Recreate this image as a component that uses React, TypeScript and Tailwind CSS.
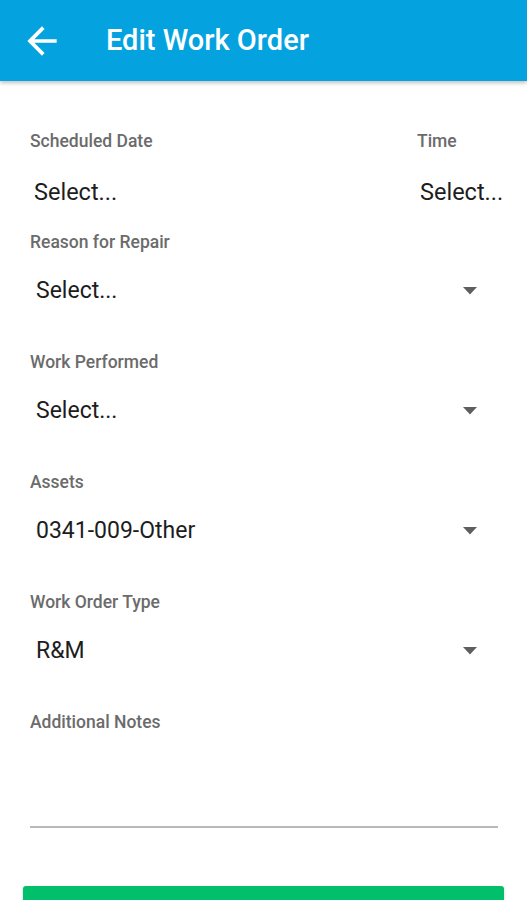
import React from 'react';

const Caret = () => (
  <svg width="14" height="8" viewBox="0 0 14 8" className="shrink-0">
    <path d="M0 0h14L7 7.5z" fill="#5f5f5f" />
  </svg>
);

const Label = ({ children }: { children: React.ReactNode }) => (
  <div className="h-5 text-[17.5px] leading-5 font-medium text-[#6b6b6b]">{children}</div>
);

const Dropdown = ({ label, value }: { label: string; value: string }) => (
  <div className="mb-[47px]">
    <Label>{label}</Label>
    <div className="mt-[25px] flex h-7 items-center justify-between pl-[6px] pr-[20px]">
      <span className="text-[23px] leading-7 text-[#1d1d1d]">{value}</span>
      <Caret />
    </div>
  </div>
);

export default function App() {
  return (
    <div className="min-h-[900px] bg-white font-['Roboto',sans-serif]">
      {/* Toolbar */}
      <header className="relative z-10 flex h-[81px] items-center bg-[#04a3df] shadow-[0_2px_4px_rgba(0,0,0,0.25)]">
        <svg width="44" height="44" viewBox="0 0 24 24" className="ml-[20px]">
          <path d="M20 11H7.83l5.59-5.59L12 4l-8 8 8 8 1.41-1.41L7.83 13H20v-2z" fill="#fff" />
        </svg>
        <h1 className="ml-[42px] text-[29px] font-medium text-white">Edit Work Order</h1>
      </header>

      <div className="pt-[50px]">
        {/* Date / time row */}
        <div className="flex">
          <div className="flex-1 pl-[30px]">
            <Label>Scheduled Date</Label>
            <div className="mt-[27px] h-7 pl-[4px] text-[23.5px] leading-7 text-[#1d1d1d]">Select...</div>
          </div>
          <div className="w-[110px]">
            <Label>Time</Label>
            <div className="mt-[27px] h-7 pl-[3px] text-[23.5px] leading-7 text-[#1d1d1d]">Select...</div>
          </div>
        </div>

        <div className="mt-[26px] px-[30px]">
          <Dropdown label="Reason for Repair" value="Select..." />
          <Dropdown label="Work Performed" value="Select..." />
          <Dropdown label="Assets" value="0341-009-Other" />
          <Dropdown label="Work Order Type" value="R&M" />

          <Label>Additional Notes</Label>
          <div className="mr-[-1px] h-[96px] border-b-2 border-[#b9b9b9]" />
        </div>

        <div className="mt-[58px] px-[23px]">
          <button className="flex h-[80px] w-full items-center justify-center rounded-[3px] bg-[#02bf6c] text-[18px] font-medium text-white shadow-[0_1px_3px_rgba(0,0,0,0.2)]">
            SAVE
          </button>
        </div>
      </div>
    </div>
  );
}
